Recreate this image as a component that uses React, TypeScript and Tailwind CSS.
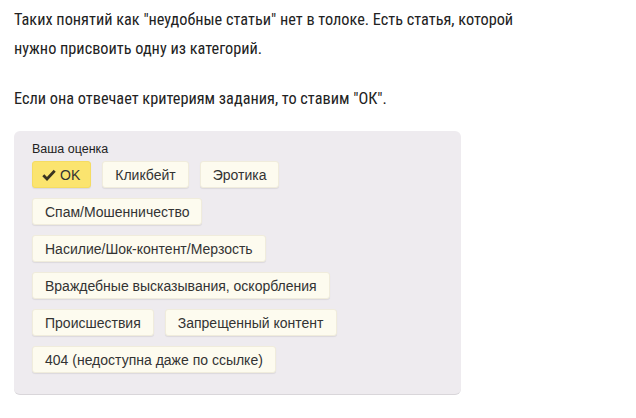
import React from "react";

function Btn({ children, active, className }: { children: React.ReactNode; active?: boolean; className?: string }) {
  return (
    <div
      className={
        "h-[27px] flex items-center rounded-[3px] text-[14px] text-[#333] leading-none shadow-[0_1px_1px_rgba(0,0,0,0.08)] border " +
        (active ? "bg-[#fbe46f] border-[#f5dc62] " : "bg-[#fdfbef] border-[#f0ecdc] ") +
        (className ?? "px-[12px]")
      }
      style={{ fontFamily: "Arial, 'Liberation Sans', sans-serif" }}
    >
      {children}
    </div>
  );
}

export default function App() {
  return (
    <div className="w-[636px] h-[418px] bg-white overflow-hidden">
      <div
        className="pl-[14px] pt-[5px] text-[16.3px] leading-[29px] text-[#222]"
        style={{ fontFamily: "'Roboto Condensed', 'Liberation Sans Narrow', 'Open Sans', sans-serif" }}
      >
        <p>
          Таких понятий как "неудобные статьи" нет в толоке. Есть статья, которой
          <br />
          нужно присвоить одну из категорий.
        </p>
        <p className="mt-[21px]">Если она отвечает критериям задания, то ставим "ОК".</p>
      </div>
      <div className="ml-[14px] mt-[18px] w-[447px] h-[264px] rounded-[6px] bg-[#eeebef] border-b border-[#d9d6da] pt-[10px] pl-[18px]">
        <div
          className="text-[12.5px] leading-[16px] text-[#222]"
          style={{ fontFamily: "Arial, 'Liberation Sans', sans-serif" }}
        >
          Ваша оценка
        </div>
        <div className="mt-[4px] flex flex-col gap-[10px]">
          <div className="flex gap-[11px]">
            <Btn active className="pl-[9px] pr-[10px]">
              <svg width="14" height="12" viewBox="0 0 14 12" className="mr-[4px]">
                <path d="M1.3 6.3 L5 10 L12.7 1.8" fill="none" stroke="#3a3320" strokeWidth="2.8" strokeLinejoin="miter" />
              </svg>
              OK
            </Btn>
            <Btn>Кликбейт</Btn>
            <Btn>Эротика</Btn>
          </div>
          <div className="flex gap-[11px]">
            <Btn>Спам/Мошенничество</Btn>
          </div>
          <div className="flex gap-[11px]">
            <Btn>Насилие/Шок-контент/Мерзость</Btn>
          </div>
          <div className="flex gap-[11px]">
            <Btn>Враждебные высказывания, оскорбления</Btn>
          </div>
          <div className="flex gap-[11px]">
            <Btn>Происшествия</Btn>
            <Btn>Запрещенный контент</Btn>
          </div>
          <div className="flex gap-[11px]">
            <Btn>404 (недоступна даже по ссылке)</Btn>
          </div>
        </div>
      </div>
    </div>
  );
}
